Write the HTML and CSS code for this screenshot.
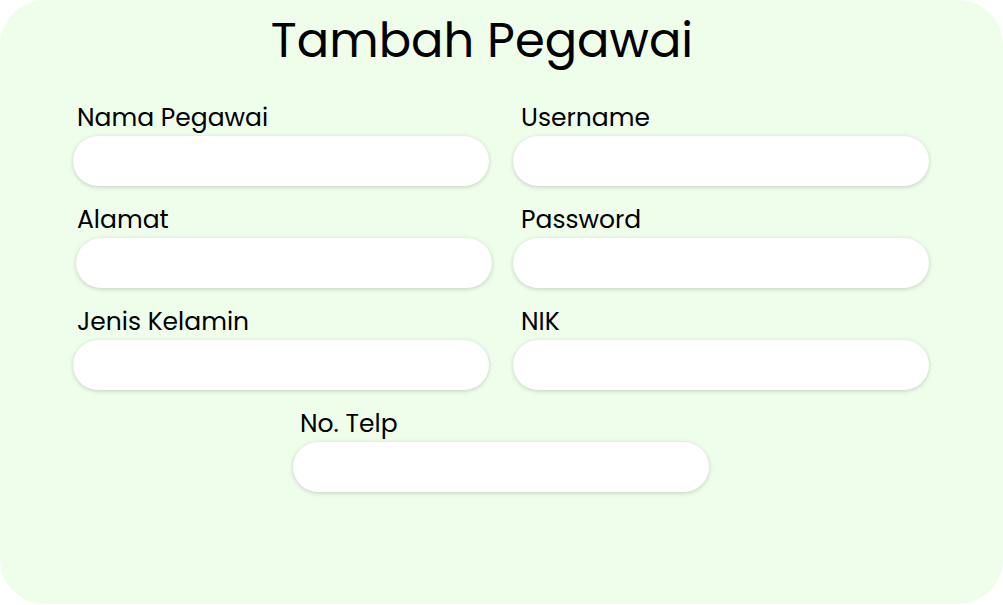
FILE: index.html
```html
<!DOCTYPE html>
<html lang="id">
<head>
<meta charset="utf-8">
<title>Tambah Pegawai</title>
<link rel="stylesheet" href="styles.css">
</head>
<body>
<main class="card">
  <h1 class="title">Tambah Pegawai</h1>
  <form class="form">
    <div class="field field-left">
      <label class="label" for="nama">Nama Pegawai</label>
      <input class="input" id="nama" type="text">
    </div>
    <div class="field field-right">
      <label class="label" for="username">Username</label>
      <input class="input" id="username" type="text">
    </div>
    <div class="field field-left field-shift">
      <label class="label" for="alamat">Alamat</label>
      <input class="input" id="alamat" type="text">
    </div>
    <div class="field field-right">
      <label class="label" for="password">Password</label>
      <input class="input" id="password" type="password">
    </div>
    <div class="field field-left">
      <label class="label" for="jk">Jenis Kelamin</label>
      <input class="input" id="jk" type="text">
    </div>
    <div class="field field-right">
      <label class="label" for="nik">NIK</label>
      <input class="input" id="nik" type="text">
    </div>
    <div class="field field-center">
      <label class="label" for="telp">No. Telp</label>
      <input class="input" id="telp" type="text">
    </div>
  </form>
</main>
</body>
</html>
```

FILE: styles.css
```css
html, body {
  margin: 0;
  padding: 0;
  background: #ffffff;
}

body {
  width: 1003px;
  height: 605px;
  font-family: "Poppins", "Inter", "Noto Sans", sans-serif;
  color: #000000;
}

.card {
  box-sizing: border-box;
  width: 1003px;
  height: 604px;
  background: #effeeb;
  border-radius: 45px;
  padding: 13px 74px 0 73px;
}

.title {
  margin: 0 38px 0 0;
  font-size: 48px;
  font-weight: 400;
  line-height: 56px;
  text-align: center;
}

.form {
  margin-top: 34px;
  display: grid;
  grid-template-columns: 416px 416px;
  column-gap: 24px;
  row-gap: 19px;
}

.field {
  display: flex;
  flex-direction: column;
  gap: 3px;
}

.label {
  font-size: 25px;
  line-height: 30px;
  padding-left: 4px;
}

.field-right .label {
  padding-left: 8px;
}

.field-shift {
  margin-left: 3px;
}

.field-shift .label {
  padding-left: 1px;
}

.field-center {
  grid-column: 1 / span 2;
  justify-self: center;
  width: 416px;
}

.field-center .label {
  padding-left: 7px;
}

.input {
  box-sizing: border-box;
  width: 416px;
  height: 50px;
  margin: 0;
  border: none;
  border-radius: 25px;
  background: #ffffff;
  box-shadow: 0 1px 4px rgba(50, 70, 50, 0.25);
  padding: 0 20px;
  font: inherit;
  font-size: 20px;
  outline: none;
}
```
